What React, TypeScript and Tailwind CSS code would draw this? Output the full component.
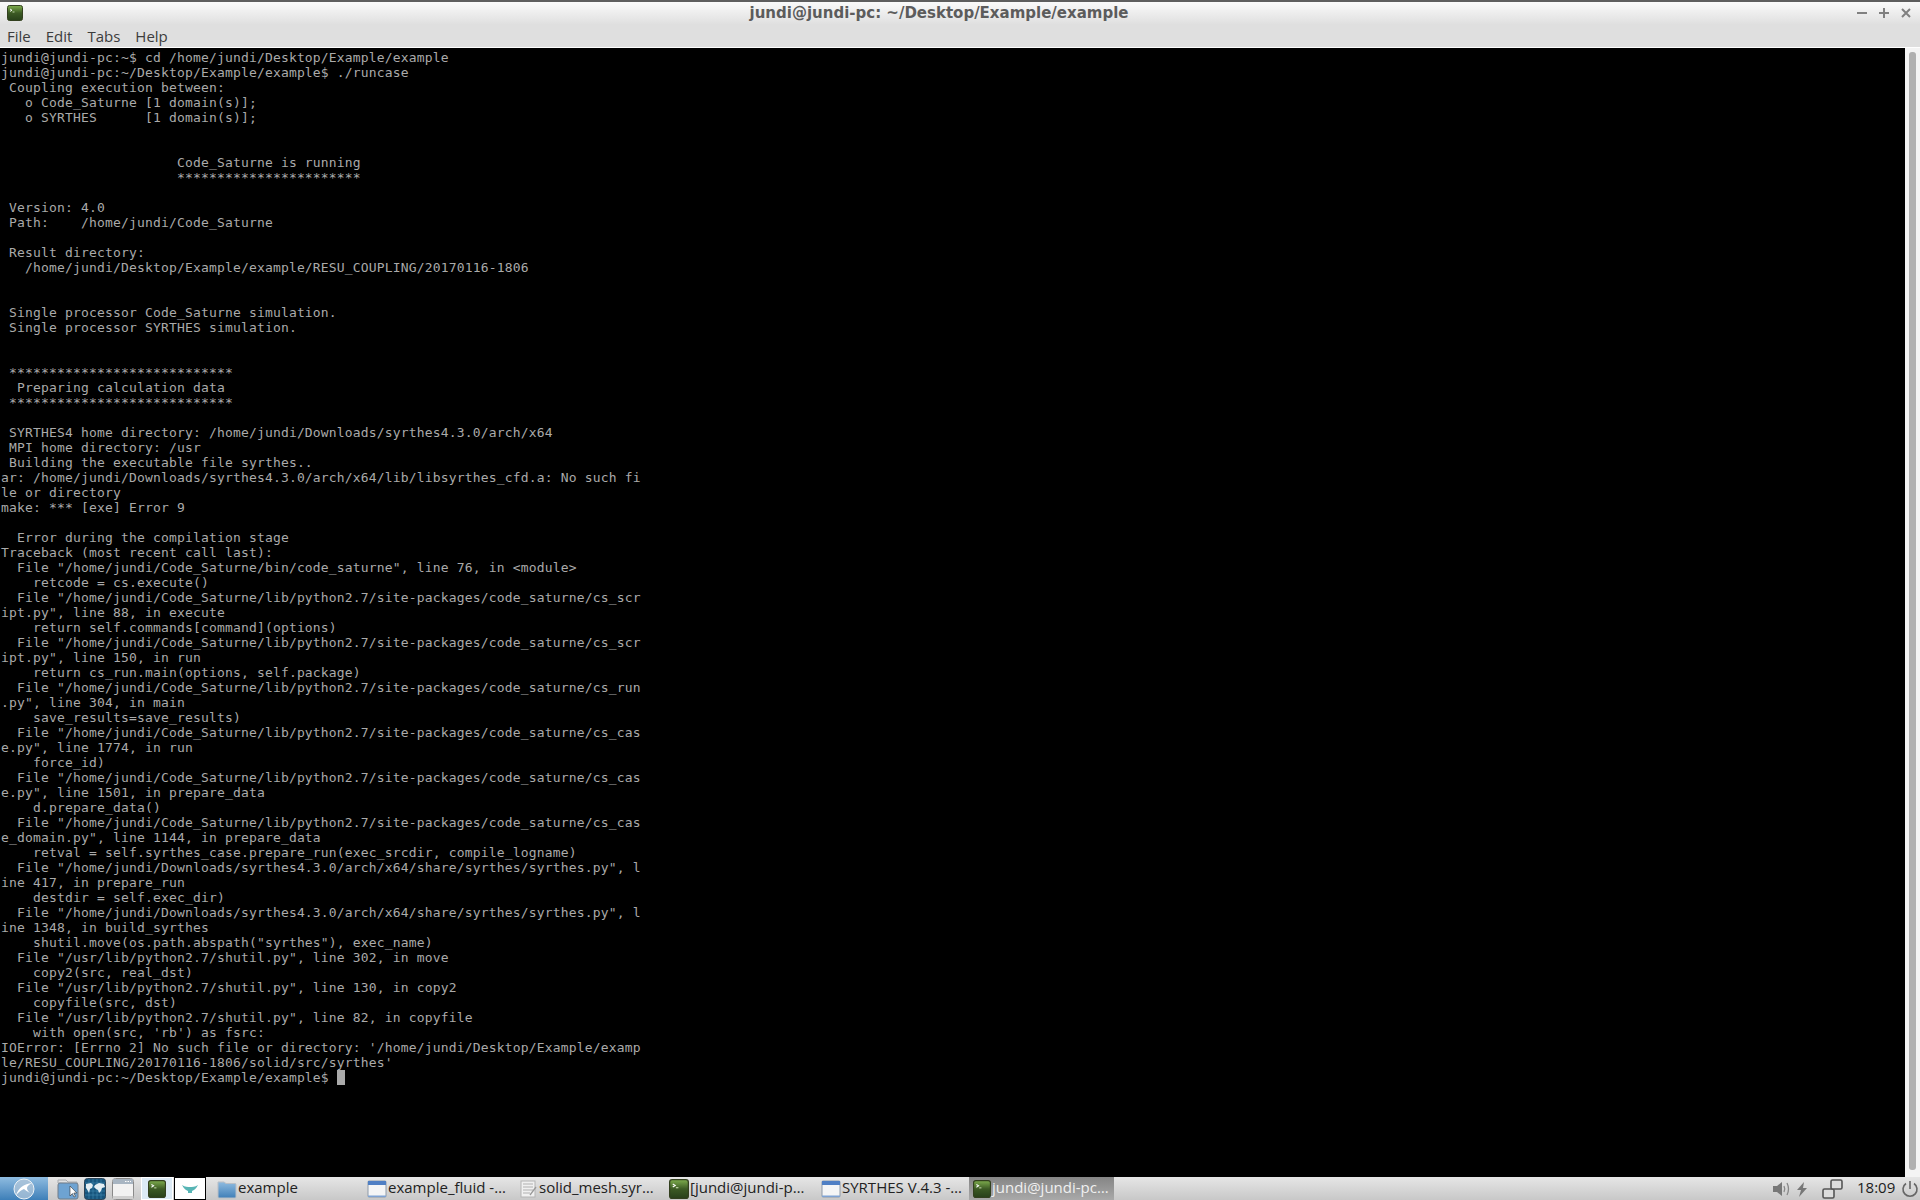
import React from "react";

const lines = [
"jundi@jundi-pc:~$ cd /home/jundi/Desktop/Example/example",
"jundi@jundi-pc:~/Desktop/Example/example$ ./runcase",
" Coupling execution between:",
"   o Code_Saturne [1 domain(s)];",
"   o SYRTHES      [1 domain(s)];",
"",
"",
"                      Code_Saturne is running",
"                      ***********************",
"",
" Version: 4.0",
" Path:    /home/jundi/Code_Saturne",
"",
" Result directory:",
"   /home/jundi/Desktop/Example/example/RESU_COUPLING/20170116-1806",
"",
"",
" Single processor Code_Saturne simulation.",
" Single processor SYRTHES simulation.",
"",
"",
" ****************************",
"  Preparing calculation data",
" ****************************",
"",
" SYRTHES4 home directory: /home/jundi/Downloads/syrthes4.3.0/arch/x64",
" MPI home directory: /usr",
" Building the executable file syrthes..",
"ar: /home/jundi/Downloads/syrthes4.3.0/arch/x64/lib/libsyrthes_cfd.a: No such fi",
"le or directory",
"make: *** [exe] Error 9",
"",
"  Error during the compilation stage",
"Traceback (most recent call last):",
"  File \"/home/jundi/Code_Saturne/bin/code_saturne\", line 76, in <module>",
"    retcode = cs.execute()",
"  File \"/home/jundi/Code_Saturne/lib/python2.7/site-packages/code_saturne/cs_scr",
"ipt.py\", line 88, in execute",
"    return self.commands[command](options)",
"  File \"/home/jundi/Code_Saturne/lib/python2.7/site-packages/code_saturne/cs_scr",
"ipt.py\", line 150, in run",
"    return cs_run.main(options, self.package)",
"  File \"/home/jundi/Code_Saturne/lib/python2.7/site-packages/code_saturne/cs_run",
".py\", line 304, in main",
"    save_results=save_results)",
"  File \"/home/jundi/Code_Saturne/lib/python2.7/site-packages/code_saturne/cs_cas",
"e.py\", line 1774, in run",
"    force_id)",
"  File \"/home/jundi/Code_Saturne/lib/python2.7/site-packages/code_saturne/cs_cas",
"e.py\", line 1501, in prepare_data",
"    d.prepare_data()",
"  File \"/home/jundi/Code_Saturne/lib/python2.7/site-packages/code_saturne/cs_cas",
"e_domain.py\", line 1144, in prepare_data",
"    retval = self.syrthes_case.prepare_run(exec_srcdir, compile_logname)",
"  File \"/home/jundi/Downloads/syrthes4.3.0/arch/x64/share/syrthes/syrthes.py\", l",
"ine 417, in prepare_run",
"    destdir = self.exec_dir)",
"  File \"/home/jundi/Downloads/syrthes4.3.0/arch/x64/share/syrthes/syrthes.py\", l",
"ine 1348, in build_syrthes",
"    shutil.move(os.path.abspath(\"syrthes\"), exec_name)",
"  File \"/usr/lib/python2.7/shutil.py\", line 302, in move",
"    copy2(src, real_dst)",
"  File \"/usr/lib/python2.7/shutil.py\", line 130, in copy2",
"    copyfile(src, dst)",
"  File \"/usr/lib/python2.7/shutil.py\", line 82, in copyfile",
"    with open(src, 'rb') as fsrc:",
"IOError: [Errno 2] No such file or directory: '/home/jundi/Desktop/Example/examp",
"le/RESU_COUPLING/20170116-1806/solid/src/syrthes'",
];

const TermIcon = ({ s = 16 }: { s?: number }) => (
  <svg width={s} height={s} viewBox="0 0 16 16" className="shrink-0">
    <defs>
      <linearGradient id="tg" x1="0" y1="0" x2="0" y2="1">
        <stop offset="0" stopColor="#7fae4e" />
        <stop offset="0.5" stopColor="#3c5a24" />
        <stop offset="1" stopColor="#28401a" />
      </linearGradient>
    </defs>
    <rect x="0.5" y="0.5" width="15" height="15" rx="2" fill="url(#tg)" stroke="#33401f" />
    <path d="M3 4l2 1.2L3 6.4" stroke="#fff" fill="none" strokeWidth="0.9" />
    <path d="M5.5 7h2" stroke="#d8e8c0" strokeWidth="0.8" />
  </svg>
);

const WinIcon = () => (
  <svg width="20" height="20" viewBox="0 0 20 20" className="shrink-0">
    <rect x="1" y="2" width="18" height="16" rx="1" fill="#f4f5f6" stroke="#8e9aa8" />
    <rect x="1" y="2" width="18" height="4" fill="#4f7fc4" />
    <rect x="1" y="16.5" width="18" height="1.5" fill="#7fa3d4" />
  </svg>
);

const DocIcon = () => (
  <svg width="18" height="18" viewBox="0 0 18 18" className="shrink-0">
    <rect x="1" y="1" width="14" height="16" fill="#f0f0f0" stroke="#b4b4b4" />
    <path d="M3 4h10M3 7h10M3 10h10M3 13h7" stroke="#b0b0b0" />
    <path d="M16 7l-6 8" stroke="#999" strokeWidth="1.3" />
  </svg>
);

const FolderIcon = () => (
  <svg width="20" height="20" viewBox="0 0 20 20" className="shrink-0">
    <defs>
      <linearGradient id="fg" x1="0" y1="0" x2="0" y2="1">
        <stop offset="0" stopColor="#8fbbe0" />
        <stop offset="1" stopColor="#3f7fb8" />
      </linearGradient>
    </defs>
    <path d="M1 3h6l2 1.5h9a1 1 0 0 1 1 1V18a1 1 0 0 1-1 1H2a1 1 0 0 1-1-1z" fill="url(#fg)" stroke="#b9bfc6" />
  </svg>
);

const Task = ({
  icon, label, active = false, w,
}: { icon: React.ReactNode; label: string; active?: boolean; w: string }) => (
  <div
    className={`${w} h-full flex items-center gap-[1px] pr-1 shrink-0 overflow-hidden ${
      active ? "pl-[4px] bg-gradient-to-b from-[#858585] to-[#a9a9a9] text-[#f0f0f0]" : "pl-[1px] text-[#222]"
    }`}
  >
    {icon}
    <span className="whitespace-nowrap -mt-[2px]">{label}</span>
  </div>
);

export default function App() {
  return (
    <div className="w-[1920px] h-[1200px] flex flex-col overflow-hidden bg-black">
      {/* title bar */}
      <div className="h-[24px] shrink-0 relative flex items-center justify-center border-t-2 border-[#5e5e5e] bg-gradient-to-b from-[#fafafa] to-[#e0e0e0]">
        <div className="absolute left-[7px] top-[3px]"><TermIcon /></div>
        <span className="font-['DejaVu_Sans',sans-serif] font-bold text-[15px] text-[#5c5c5c] -ml-[42px]">
          jundi@jundi-pc: ~/Desktop/Example/example
        </span>
        <div className="absolute right-0 top-0 flex items-center gap-[8px] pr-[7px] h-full text-[#808080]">
          <svg width="14" height="14" viewBox="0 0 14 14"><path d="M2 7h10" stroke="#808080" strokeWidth="2" /></svg>
          <svg width="14" height="14" viewBox="0 0 14 14"><path d="M2 7h10M7 2v10" stroke="#808080" strokeWidth="2" /></svg>
          <svg width="14" height="14" viewBox="0 0 14 14"><path d="M3 3l8 8M11 3l-8 8" stroke="#808080" strokeWidth="2" /></svg>
        </div>
      </div>
      {/* menu bar */}
      <div className="h-[24px] shrink-0 flex items-center gap-[15px] pl-[7px] pt-[2px] bg-[#dfdfdf] border-b border-white font-['Open_Sans',sans-serif] text-[15px] text-[#3c3c3c]">
        <span>File</span>
        <span>Edit</span>
        <span>Tabs</span>
        <span>Help</span>
      </div>
      {/* terminal */}
      <div className="flex-1 min-h-0 flex">
        <pre className="flex-1 m-0 pt-[2px] pl-[1px] bg-black text-[#aaaaaa] font-['DejaVu_Sans_Mono',monospace] text-[13px] leading-[15px] tracking-[0.17px] overflow-hidden">
          {lines.map((l, i) => (
            <div key={i} className="h-[15px]">{l}</div>
          ))}
          <div className="h-[15px] flex">
            <span>jundi@jundi-pc:~/Desktop/Example/example$ </span>
            <span className="inline-block w-[8px] h-[15px] bg-[#aaaaaa]" />
          </div>
        </pre>
        <div className="w-[15px] shrink-0 bg-[#f4f4f4] pt-[4px] pb-[7px] pl-[4px] pr-[4px]">
          <div className="h-full w-[7px] rounded-t-[3px] rounded-b-[3px] bg-[#b0b0b0]" />
        </div>
      </div>
      {/* taskbar */}
      <div className="h-[23px] shrink-0 flex items-center bg-gradient-to-b from-[#e6e6e6] to-[#c8c8c8] font-['Open_Sans',sans-serif] text-[15px]">
        <div className="w-[48px] h-full shrink-0 flex items-center justify-center bg-gradient-to-b from-[#8fbce0] to-[#3d7fb8]">
          <svg width="22" height="22" viewBox="0 0 22 22">
            <circle cx="11" cy="11" r="10" fill="#b8cbdb" fillOpacity="0.7" stroke="#eef3f7" />
            <path d="M3 17C6 9 11 6 19 5c-3 2-5 3-5 5 0 2 1 3 3 5-3-2-5-3-6-4-3 1-5 3-8 6z" fill="#ffffff" />
          </svg>
        </div>
        <div className="w-[9px] shrink-0" />
        <div className="w-[27px] shrink-0 flex items-center relative">
          <svg width="22" height="22" viewBox="0 0 22 22">
            <path d="M1 5V2h8l2 2h9v2z" fill="#dfe1e3" stroke="#a9acb0" />
            <rect x="1" y="5" width="20" height="16" rx="2" fill="#6ea3d2" stroke="#707c88" />
            <path d="M13 8v10l2.4-2.4 1.6 3.4 1.4-.7-1.6-3.3h3z" fill="#fff" stroke="#333" strokeWidth="0.6" />
          </svg>
        </div>
        <div className="w-[28px] shrink-0 flex items-center">
          <svg width="22" height="22" viewBox="0 0 22 22">
            <rect x="0.5" y="0.5" width="21" height="21" rx="3" fill="#17557d" stroke="#2d4558" />
            <path d="M1 5h20M1 9h20M1 13h20M1 17h20M5 1v20M9 1v20M13 1v20M17 1v20" stroke="#4a93ba" strokeWidth="0.5" />
            <path d="M2 6l5-1 2 2-1 3-2 1-1 4-1-2-2-3zM11 7l4-2 5 1 1 3-3 1-1 3-2 2-1-3-2-1-2-2z" fill="#e4eef3" />
          </svg>
        </div>
        <div className="w-[29px] shrink-0 flex items-center">
          <svg width="22" height="22" viewBox="0 0 22 22">
            <rect x="0.5" y="0.5" width="21" height="21" rx="3" fill="#f2f2f2" stroke="#8a8a8a" />
            <rect x="1" y="1" width="20" height="5" fill="#a8b5c2" />
            <path d="M13 3.5h6" stroke="#fff" strokeDasharray="1.5 1" />
            <rect x="1" y="18" width="20" height="3" fill="#d0d0d0" />
          </svg>
        </div>
        <div className="w-[32px] h-full shrink-0 flex items-center justify-center bg-[#dceaf5] border border-white"><TermIcon s={18} /></div>
        <div className="w-[32px] h-full shrink-0 ml-[1px] flex items-center justify-center bg-white border border-black">
          <svg width="18" height="12" viewBox="0 0 18 12">
            <path d="M1 2c3 2 6 2 8 2s5 0 8-2c-2 4-4 5-6 6v2H7V8C5 7 3 6 1 2z" fill="#57b5b5" />
          </svg>
        </div>
        <div className="w-[10px] shrink-0" />
        <Task icon={<FolderIcon />} label="example" w="w-[150px]" />
        <Task icon={<WinIcon />} label="example_fluid -…" w="w-[153px]" />
        <Task icon={<DocIcon />} label="solid_mesh.syr…" w="w-[149px]" />
        <Task icon={<TermIcon s={20} />} label="[jundi@jundi-p…" w="w-[152px]" />
        <Task icon={<WinIcon />} label="SYRTHES V.4.3 -…" w="w-[149px]" />
        <Task icon={<TermIcon s={18} />} label="jundi@jundi-pc…" active w="w-[145px]" />
        <div className="flex-1" />
        <div className="flex items-center text-[#222] h-full">
          <svg width="20" height="18" viewBox="0 0 20 18">
            <path d="M1 6h4l5-4v14l-5-4H1z" fill="#777" />
            <path d="M12 6c1 2 1 4 0 6M15 3c2 4 2 8 0 12" stroke="#888" fill="none" strokeWidth="1.3" />
          </svg>
          <svg width="14" height="18" viewBox="0 0 14 18" className="ml-[3px]">
            <path d="M9 2L2 10h4l-2 7 8-9H8z" fill="#777" />
          </svg>
          <svg width="22" height="22" viewBox="0 0 22 22" className="ml-[13px]">
            <rect x="1" y="11" width="11" height="9" rx="1.5" fill="#ddd" stroke="#555" strokeWidth="1.6" />
            <rect x="9" y="2" width="11" height="9" rx="1.5" fill="#ddd" stroke="#555" strokeWidth="1.6" />
          </svg>
          <span className="ml-[13px] w-[36px] text-[15px] text-[#1c1c1c] -mt-[2px] whitespace-nowrap">18:09</span>
          <svg width="20" height="20" viewBox="0 0 20 20" className="ml-[7px]">
            <path d="M6 4.5a7 7 0 1 0 8 0M10 2v8" stroke="#666" fill="none" strokeWidth="1.6" />
          </svg>
        </div>
      </div>
    </div>
  );
}
